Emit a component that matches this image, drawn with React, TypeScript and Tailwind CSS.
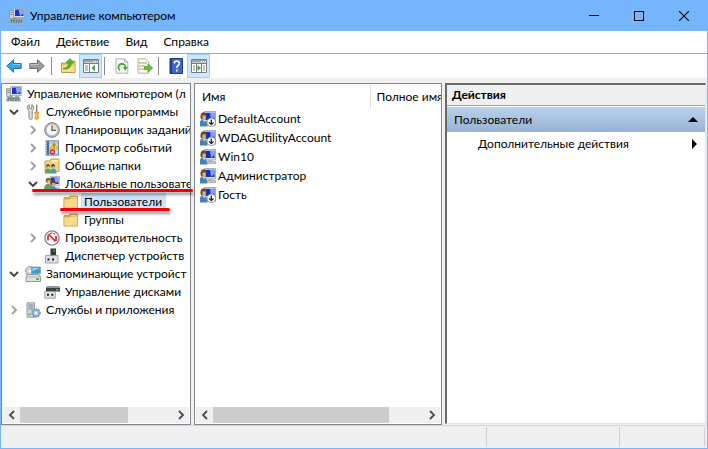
import type { ReactNode } from "react";

const Svg = ({ children }: { children: ReactNode }) => (
  <svg viewBox="0 0 16 16" className="size-4 shrink-0" aria-hidden="true">
    {children}
  </svg>
);

const ComputerIcon = () => (
  <Svg>
    <path d="M4.500.5h11v9h-11z" fill="#dfe2e4" stroke="#9a9fa3" strokeWidth=".7" />
    <path d="M6 1.500h8.500v6.500H6z" fill="#1a2fd0" />
    <path d="M9.500 1.500h5v4L11 8z" fill="#86a8f6" />
    <path d="M.5 2.500h4v8h-4z" fill="#d3d6d8" stroke="#8a8f93" strokeWidth=".7" />
    <path d="M1.300 4.500h2.400M1.300 6.500h2.400" stroke="#6a7074" strokeWidth=".8" />
    <path d="M9 9.800h4v1.400H9z" fill="#a3a8ab" />
    <path d="M1 11h13l1 4.500H0z" fill="#a2abb0" />
    <path d="M2 12.300h11M1.500 14h12" stroke="#4f5d64" strokeDasharray="1.500 1" />
    <path d="M4.500 9.500h2v2h-2z" fill="#67b946" />
  </Svg>
);

const ToolsIcon = () => (
  <Svg>
    <path d="M3.200.6v4h2.600v-4c1.500.6 2 2 2 3.200 0 1.400-.7 2.200-1.600 2.800v8c0 .8-3.200.8-3.200 0v-8C2 6 1.300 5.200 1.300 3.800 1.300 2.500 1.800 1.200 3.200.6z" transform="translate(1 0)" fill="#e2e4e5" stroke="#777b7e" strokeWidth=".9" />
    <path d="M11 .5h1.400v7.500H11z" fill="#7c8185" />
    <path d="M9.800 8h3.800v2l-.8.8.9 3.700c0 1.200-4 1.200-4 0l.9-3.700-.8-.8z" fill="#f2ac13" stroke="#c4860b" strokeWidth=".5" />
    <path d="M11.200 9v5.500" stroke="#ffe08a" strokeWidth=".8" />
  </Svg>
);

const ClockIcon = () => (
  <Svg>
    <circle cx="8" cy="8" r="7.400" fill="#b4babe" stroke="#7c858b" strokeWidth=".9" />
    <circle cx="8" cy="8" r="5.700" fill="#f4f6f8" stroke="#959ca1" strokeWidth=".4" />
    <path d="M8 8V2.300A5.700 5.700 0 0 1 13.700 8z" fill="#f8e2a4" />
    <path d="M8 3.500V8.300h4" fill="none" stroke="#4a5a78" strokeWidth="1.200" />
  </Svg>
);

const EventsIcon = () => (
  <Svg>
    <path d="M2 .8h12.500v14.400H2z" fill="#b5cde6" stroke="#5d7896" strokeWidth=".8" />
    <path d="M2.500 1.300h2.500v13.300H2.500z" fill="#496b93" />
    <path d="M1 3h2M1 5.500h2M1 8h2M1 10.500h2M1 13h2" stroke="#ddd" />
    <path d="M6 5h8M6 9h8M6 12h8" stroke="#e9f2fb" />
    <path d="M10 2l4 6.800H6z" fill="#ffd52e" stroke="#b78b13" strokeWidth=".6" />
    <path d="M10 4.200v2.400M10 7.200v.9" stroke="#222" strokeWidth=".9" />
    <circle cx="8.500" cy="12" r="2.700" fill="#d6292d" />
    <path d="M7.500 11l2 2M9.500 11l-2 2" stroke="#fff" strokeWidth=".9" />
  </Svg>
);

const FolderIcon = () => (
  <Svg>
    <path d="M1 3.500h5l1-1.500h7.500v12H1z" fill="#dfae4c" stroke="#b98d35" strokeWidth=".6" />
    <path d="M8 3h5.500v2H8z" fill="#fff8dd" />
    <path d="M1 5h6l1-1h6.500v10H1z" fill="#f7da8c" stroke="#cda044" strokeWidth=".6" />
  </Svg>
);

const SharedIcon = () => (
  <Svg>
    <path d="M1 3h5l1-2h8v12.500H1z" fill="#f5d683" stroke="#bd9139" strokeWidth=".8" />
    <path d="M8 2h6v1.500H8z" fill="#fff6d2" />
    <circle cx="4" cy="8" r="1.900" fill="#7b4f28" />
    <circle cx="9" cy="8" r="1.900" fill="#54402f" />
    <path d="M3.300 8.200h1.800V10H3.300zM8.300 8.200h1.800V10H8.300z" fill="#efc49d" />
    <path d="M.8 15.500c0-3.500 1-5 3.200-5s3.200 1.500 3.200 5z" fill="#5aa852" />
    <path d="M6.300 15.500c0-3.500.8-5 3-5s3.200 1.500 3.200 5z" fill="#4c98cf" />
  </Svg>
);

const LocalUsersIcon = () => (
  <Svg>
    <path d="M6 .5h9.500v9H6z" fill="#dfe2e4" stroke="#959a9e" strokeWidth=".6" />
    <path d="M7 1.500h7.500v6.500H7z" fill="#1a2fd0" />
    <path d="M10.500 1.500h4v3.500L11 8z" fill="#86a8f6" />
    <path d="M11 11h4.500v3H11z" fill="#b4babd" />
    <circle cx="4.500" cy="4.500" r="2.800" fill="#8a6334" />
    <path d="M3.500 4.500h2.800v3.500H3.500z" fill="#ecc09a" />
    <path d="M0 14.500c0-4 1-6.500 4-6.500s4 2.500 4 6.500z" fill="#65a458" />
    <circle cx="9" cy="6.800" r="2.700" fill="#5a4432" />
    <path d="M8 7h2.800v3H8z" fill="#dfae83" />
    <path d="M5.500 15.500c0-3.500 1-5.500 3.500-5.500s3.500 2 3.500 5.500z" fill="#4b8fc2" />
  </Svg>
);

const PerformanceIcon = () => (
  <Svg>
    <circle cx="8" cy="8" r="7.100" fill="#fff" stroke="#85898d" strokeWidth="1.400" />
    <path d="M3.800 5.500a5 5 0 0 1 8.400 0" fill="none" stroke="#d9262c" strokeWidth="1.200" strokeDasharray="2 1" />
    <path d="M4 10.500V5.500M5 4.500l6.500 7M12 6v5" fill="none" stroke="#d9262c" strokeWidth="1.700" />
  </Svg>
);

const DeviceIcon = () => (
  <Svg>
    <path d="M6.500.5H12v7H6.500z" fill="#34393c" />
    <path d="M9.500 2H11v1.500H9.500z" fill="#55d24a" />
    <path d="M1.500 7.500h12.500V15H1.500z" fill="#dfe2e4" stroke="#8b9094" strokeWidth=".8" />
    <path d="M3.500 10.500h2v2h-2zM8 10.500h2v2H8z" fill="#202426" />
  </Svg>
);

const StorageIcon = () => (
  <Svg>
    <circle cx="5" cy="5" r="4.500" fill="#d0d4d7" stroke="#858b90" strokeWidth=".8" />
    <circle cx="5" cy="5" r="1.300" fill="#fff" />
    <path d="M6.500 1h9v6.500h-9z" fill="#379fd0" stroke="#89969e" strokeWidth=".7" />
    <path d="M7.500 2h7l-7 3z" fill="#9bdcf3" />
    <path d="M2 8.500h12l1.500 2.500v4.500H1V11z" fill="#dfe2e4" stroke="#7b8185" strokeWidth=".8" />
    <path d="M1 11h14.500" stroke="#999" strokeWidth=".6" />
    <path d="M11 12.300h3v1.800h-3z" fill="#4bb32f" />
  </Svg>
);

const DiskIcon = () => (
  <Svg>
    <path d="M3 2.500h12l1 1.500v3.500H2V4z" fill="#3b4043" />
    <path d="M3 2.500h12l1 1.500H2z" fill="#8f9699" />
    <path d="M12 5h2.500v1.500H12z" fill="#43d43b" />
    <path d="M.8 7.500h10.500v6.700H.8z" fill="#dfe2e4" stroke="#8b9094" strokeWidth=".8" />
    <path d="M3 9.800h2v2H3zM7.300 9.800h2v2h-2z" fill="#202426" />
  </Svg>
);

const ServicesIcon = () => (
  <Svg>
    <path d="M2 .8h7.500v14.400H2z" fill="#cfd8de" stroke="#7c8b95" strokeWidth=".8" />
    <path d="M3.300 3h5M3.300 5h5M3.300 7h5" stroke="#70808b" strokeWidth=".9" />
    <path d="M3 12.500h2.500" stroke="#51b744" strokeWidth="1.500" />
    <circle cx="11" cy="11" r="4" fill="#9dbbd9" stroke="#6c92b8" strokeWidth="1.500" strokeDasharray="1.600 1" />
    <circle cx="11" cy="11" r="3" fill="#b7cee5" stroke="#6c92b8" strokeWidth=".6" />
    <circle cx="11" cy="11" r="1.200" fill="#fff" />
  </Svg>
);

const UserIcon = ({ disabled }: { disabled?: boolean }) => (
  <Svg>
    <path d="M4.500.5h11v10.500h-11z" fill="#dfe2e4" stroke="#8a9094" strokeWidth=".7" />
    <path d="M5.500 1.800h9V9h-9z" fill="#152fc4" />
    <path d="M10 1.800h4.500v4L11 9z" fill="#7fa2f4" />
    <path d="M8.500 11.300h3.500v1.200H8.500z" fill="#9ea4a8" />
    <path d="M7.500 12.500h8V14.500h-8z" fill="#c5cacd" stroke="#7d8387" strokeWidth=".5" />
    <path d="M.5 6.500C-.3 0 6.500-.3 6.500 4.500L5.500 8.500H1.300z" fill="#6b4a28" />
    <path d="M2.500 4.500h3.300v4.300H2.500z" fill="#e0ae82" />
    <path d="M0 15.500V10.500c1-2 5.500-2 6.500.5l1 4.500z" fill="#4683b3" />
    <path d="M2.800 9.300l1.300 2 1.300-2z" fill="#eee" />
    {disabled && (
      <>
        <circle cx="11.300" cy="11.300" r="4.300" fill="#fff" stroke="#6e7478" strokeWidth=".7" />
        <path d="M11.300 8.500v5M9 11.400l2.300 2.300 2.300-2.300" fill="none" stroke="#222" strokeWidth="1.300" />
      </>
    )}
  </Svg>
);

const ArrowIcon = ({ forward }: { forward?: boolean }) => (
  <Svg>
    {forward ? (
      <path d="M8.500 1.800v3.700H.8v5h7.700v3.700L15.300 8z" fill="#9a9da0" stroke="#6d7173" />
    ) : (
      <path d="M7.500 1.800v3.700h7.700v5H7.500v3.700L.7 8z" fill="#36a5e6" stroke="#1c78b5" />
    )}
    <path d={forward ? "M1.500 6.700h8" : "M6.500 6.700h8"} stroke={forward ? "#c4c6c8" : "#83d0f5"} />
  </Svg>
);

const UpFolderIcon = () => (
  <Svg>
    <path d="M1.500 5h5l1-2h7.500v11.500H1.500z" fill="#edc767" stroke="#af8738" strokeWidth=".8" />
    <path d="M2 7.500h12.500V14H2z" fill="#f8dc92" />
    <path d="M3.500 10c4 0 5-2 5-5H6l4-4.500L13.500 5h-2.300c0 5-3 6.500-7.700 6z" fill="#58b830" stroke="#37871d" strokeWidth=".6" />
  </Svg>
);

const PaneIcon = ({ right }: { right?: boolean }) => (
  <Svg>
    <path d="M.5 1.500h15v13H.5z" fill="#fff" stroke="#777d82" />
    <path d="M1 2h14v2.500H1z" fill="#9da3a7" />
    <path d="M10 3.500h1M12 3.500h1M14 3.500h1" stroke="#fff" />
    <path d="M.5 5.500h15" stroke="#777d82" />
    {right ? (
      <>
        <path d="M10.500 6v8M5.500 6v8" stroke="#777d82" />
        <path d="M2 8h2M2 10h2M2 12h2M12 8h2M12 10h2M12 12h2" stroke="#858b90" />
        <path d="M6.500 7v6l3.500-3z" fill="#39a92e" />
      </>
    ) : (
      <>
        <path d="M6.500 6v8" stroke="#777d82" />
        <path d="M2 8h3M2 10h3M2 12h3" stroke="#858b90" />
        <path d="M12 7v6l-3.700-3z" fill="#39a92e" />
      </>
    )}
  </Svg>
);

const RefreshIcon = () => (
  <Svg>
    <path d="M2 .8h8.500l3.300 3.300v11.100H2z" fill="#fafafa" stroke="#9a9ea0" strokeWidth=".8" />
    <path d="M10.500 1v3h3" fill="none" stroke="#9a9ea0" strokeWidth=".8" />
    <path d="M6 12.200A3.500 3.500 0 1 1 11.400 9" fill="none" stroke="#43a935" strokeWidth="1.800" />
    <path d="M8.800 9h5l-2.300 3.700z" fill="#43a935" />
  </Svg>
);

const ExportIcon = () => (
  <Svg>
    <path d="M1 .8h7.500l3.300 3.300v11.100H1z" fill="#fdf9e6" stroke="#9a9ea0" strokeWidth=".8" />
    <path d="M2.500 5h1M2.500 8h1M2.500 11h1" stroke="#444" />
    <path d="M4.500 5H10M4.500 8H8M4.500 11H8" stroke="#a89c79" />
    <path d="M7.500 8.500H11V6l4.700 4-4.700 4v-2.500H7.500z" fill="#62c139" stroke="#3b912a" strokeWidth=".6" />
  </Svg>
);

const HelpIcon = () => (
  <Svg>
    <path d="M2 .5h12.500v15H2z" fill="#3f66cc" stroke="#1e3683" />
    <path d="M2 1h2v14H2z" fill="#1f3b96" />
    <path d="M6.300 5.500c0-3.300 5-3.300 5 0 0 2-2.500 2-2.500 4.500M8.800 11.500v2" fill="none" stroke="#fff" strokeWidth="1.600" />
  </Svg>
);

const Chevron = ({ dir }: { dir: "down" | "right" | "left" }) => {
  const paths = {
    down: "M1 3l4 4 4-4",
    right: "M3 1l4 4-4 4",
    left: "M7 1L3 5l4 4",
  };
  return (
    <svg viewBox="0 0 10 10" className="size-2.5" fill="none" stroke="currentColor" strokeWidth="1.900" aria-hidden="true">
      <path d={paths[dir]} />
    </svg>
  );
};

type Node = {
  label: string;
  icon: ReactNode;
  pad: string;
  state?: "open" | "closed";
  selected?: boolean;
};

const nodes: Node[] = [
  { label: "Служебные программы", icon: <ToolsIcon />, pad: "pl-1", state: "open" },
  { label: "Планировщик заданий", icon: <ClockIcon />, pad: "pl-[23px]", state: "closed" },
  { label: "Просмотр событий", icon: <EventsIcon />, pad: "pl-[23px]", state: "closed" },
  { label: "Общие папки", icon: <SharedIcon />, pad: "pl-[23px]", state: "closed" },
  { label: "Локальные пользовате", icon: <LocalUsersIcon />, pad: "pl-[23px]", state: "open" },
  { label: "Пользователи", icon: <FolderIcon />, pad: "pl-[42px]", selected: true },
  { label: "Группы", icon: <FolderIcon />, pad: "pl-[42px]" },
  { label: "Производительность", icon: <PerformanceIcon />, pad: "pl-[23px]", state: "closed" },
  { label: "Диспетчер устройств", icon: <DeviceIcon />, pad: "pl-[23px]" },
  { label: "Запоминающие устройст", icon: <StorageIcon />, pad: "pl-1", state: "open" },
  { label: "Управление дисками", icon: <DiskIcon />, pad: "pl-[23px]" },
  { label: "Службы и приложения", icon: <ServicesIcon />, pad: "pl-1", state: "closed" },
];

const users = [
  { name: "DefaultAccount", disabled: true },
  { name: "WDAGUtilityAccount", disabled: true },
  { name: "Win10" },
  { name: "Администратор" },
  { name: "Гость", disabled: true },
];

const TreeRow = ({ node }: { node: Node }) => (
  <li className={`flex h-[18px] items-center ${node.pad}`}>
    <span className="flex w-[19px] shrink-0 pl-[3px]">
      {node.state && (
        <button
          aria-label={node.label}
          aria-expanded={node.state === "open"}
          className={node.state === "open" ? "text-[#404040]" : "text-[#a0a0a0]"}
        >
          <Chevron dir={node.state === "open" ? "down" : "right"} />
        </button>
      )}
    </span>
    {node.icon}
    <span
      className={`ml-0.5 h-[18px] pr-1 pl-[3px] leading-[18px] whitespace-nowrap ${node.selected ? "bg-[#cce4fb]" : ""}`}
    >
      {node.label}
    </span>
  </li>
);

const ScrollBar = ({ thumb }: { thumb: string }) => (
  <div className="mx-px mb-px flex h-4 shrink-0 bg-[#f0f0f0] text-[#505050]">
    <button aria-label="Влево" className="flex w-[17px] items-center justify-center">
      <Chevron dir="left" />
    </button>
    <div className="flex-1">
      <div className={`h-full bg-[#cdcdcd] ${thumb}`} />
    </div>
    <button aria-label="Вправо" className="flex w-[17px] items-center justify-center">
      <Chevron dir="right" />
    </button>
  </div>
);

const ToolButton = ({ label, active, children }: { label: string; active?: boolean; children: ReactNode }) => (
  <button
    aria-label={label}
    className={`flex h-6 w-[23px] items-center justify-center ${active ? "border border-[#99d1ff] bg-[#cce8ff]" : ""}`}
  >
    {children}
  </button>
);

const Divider = ({ className }: { className: string }) => <span className={`h-[18px] w-px bg-[#8d8d8d] ${className}`} />;

const App = () => {
  return (
    <div className="flex h-screen flex-col border border-t-0 border-[#74b5fb] bg-[#f0f0f0] font-['Lato','Open_Sans',sans-serif] text-xs text-black">
      <header className="flex h-[31px] shrink-0 items-center bg-[#74b5fb] pl-2">
        <ComputerIcon />
        <h1 className="ml-[5px] flex-1 whitespace-nowrap">Управление компьютером</h1>
        <button aria-label="Свернуть" className="flex h-full w-[45px] items-center justify-center">
          <span className="h-px w-2.5 bg-black" />
        </button>
        <button aria-label="Развернуть" className="flex h-full w-[45px] items-center justify-center">
          <span className="size-2.5 border border-black" />
        </button>
        <button aria-label="Закрыть" className="flex h-full w-[46px] items-center justify-center">
          <svg viewBox="0 0 10 10" className="size-2.5" stroke="#000" strokeWidth="1.100">
            <path d="M0 0l10 10M10 0L0 10" />
          </svg>
        </button>
      </header>

      <nav className="flex h-[23px] shrink-0 items-center gap-4 border-b border-[#a9a9a9] bg-white pl-2.5">
        <button>Файл</button>
        <button>Действие</button>
        <button>Вид</button>
        <button>Справка</button>
      </nav>

      <div className="flex h-6 shrink-0 items-center bg-white pl-px">
        <ToolButton label="Назад"><ArrowIcon /></ToolButton>
        <ToolButton label="Вперед"><ArrowIcon forward /></ToolButton>
        <Divider className="mr-1 ml-[3px]" />
        <ToolButton label="Вверх"><UpFolderIcon /></ToolButton>
        <ToolButton label="Дерево консоли" active><PaneIcon /></ToolButton>
        <Divider className="mr-[5px] ml-[2px]" />
        <ToolButton label="Обновить"><RefreshIcon /></ToolButton>
        <ToolButton label="Экспорт списка"><ExportIcon /></ToolButton>
        <Divider className="mr-[5px] ml-[2px]" />
        <ToolButton label="Справка"><HelpIcon /></ToolButton>
        <ToolButton label="Панель действий" active><PaneIcon right /></ToolButton>
      </div>

      <main className="mt-[5px] grid min-h-0 flex-1 grid-cols-[190px_248px_1fr] gap-[3px]">
        <section className="relative flex min-w-0 flex-col border border-[#828790] bg-white">
          <ul className="flex-1 overflow-hidden pt-px">
            <li className="flex h-[18px] items-center pl-1">
              <ComputerIcon />
              <span className="ml-[5px] whitespace-nowrap">Управление компьютером (л</span>
            </li>
            {nodes.map((node) => (
              <TreeRow key={node.label} node={node} />
            ))}
          </ul>
          <ScrollBar thumb="w-[71%]" />
          <span className="absolute top-[105px] left-[30px] h-[3px] w-[161px] rounded-full bg-[#f00008] shadow-[1px_3px_3px_rgba(0,0,0,0.4)]" />
          <span className="absolute top-[124px] left-[58px] h-[3px] w-[110px] rounded-full bg-[#f00008] shadow-[1px_3px_3px_rgba(0,0,0,0.4)]" />
        </section>

        <section className="flex min-w-0 flex-col border border-[#828790] bg-white">
          <div className="flex-1 overflow-hidden">
            <table className="w-full table-fixed border-collapse text-left whitespace-nowrap">
              <thead>
                <tr className="h-[25px]">
                  <th className="w-[175px] border-r border-[#e2e2e2] p-0 pl-[7px] font-normal">Имя</th>
                  <th className="overflow-hidden p-0 pl-1.5 font-normal">Полное имя</th>
                </tr>
              </thead>
              <tbody>
                {users.map((user) => (
                  <tr key={user.name} className="h-[19px]">
                    <td className="p-0 pl-[5px]">
                      <div className="flex items-center gap-0.5">
                        <UserIcon disabled={user.disabled} />
                        <span>{user.name}</span>
                      </div>
                    </td>
                    <td />
                  </tr>
                ))}
              </tbody>
            </table>
          </div>
          <ScrollBar thumb="w-[84%]" />
        </section>

        <aside className="mr-px mb-px min-w-0 border-t-2 border-r border-b border-l-2 border-t-[#696969] border-r-[#e3e3e3] border-b-[#e3e3e3] border-l-[#696969] bg-white">
          <h2 className="h-[21px] border-b border-[#a0a0a0] bg-[#f0f0f0] pl-[5px] leading-[20px] font-bold">Действия</h2>
          <button className="mt-px flex h-[25px] w-full items-center justify-between bg-linear-to-b from-[#b9d1ea] to-[#98b3d5] pr-[7px] pl-[7px]">
            Пользователи
            <svg viewBox="0 0 10 5" className="h-[5px] w-2.5"><path d="M5 0l5 5H0z" /></svg>
          </button>
          <button className="flex h-6 w-full items-center justify-between pr-2 pl-[31px]">
            Дополнительные действия
            <svg viewBox="0 0 5 10" className="h-2.5 w-[5px]"><path d="M0 0l5 5-5 5z" /></svg>
          </button>
        </aside>
      </main>

      <footer className="flex h-[23px] shrink-0 border-t border-[#d7d7d7] py-px">
        <span className="flex-1 border-r border-[#d0d0d0]" />
        <span className="w-[133px] border-r border-[#d0d0d0]" />
        <span className="mr-0.5 w-[85px] border-r border-[#d0d0d0]" />
      </footer>
    </div>
  );
};

export default App;
